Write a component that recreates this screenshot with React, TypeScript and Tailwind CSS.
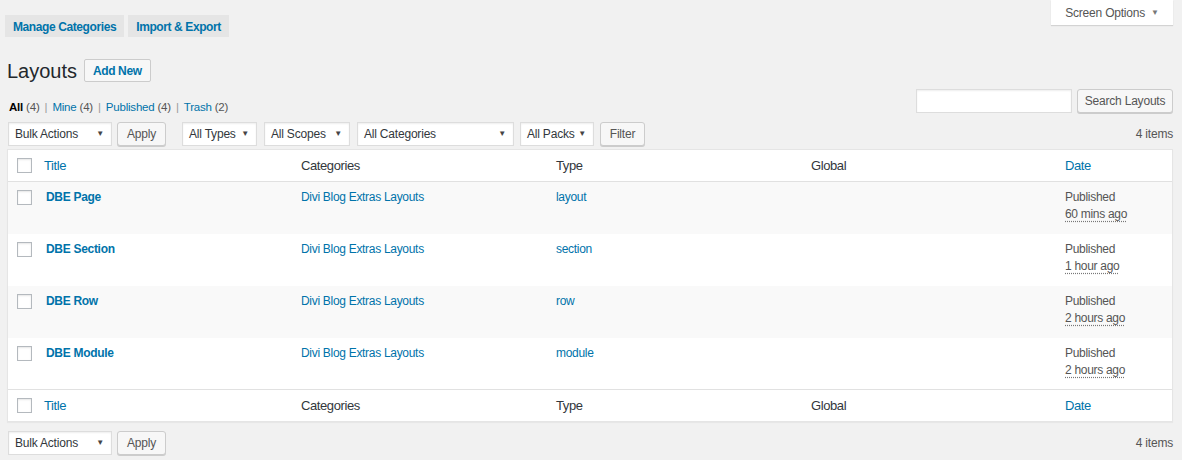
const rows = [
  { title: 'DBE Page', type: 'layout', ago: '60 mins ago' },
  { title: 'DBE Section', type: 'section', ago: '1 hour ago' },
  { title: 'DBE Row', type: 'row', ago: '2 hours ago' },
  { title: 'DBE Module', type: 'module', ago: '2 hours ago' },
];

const cols = 'grid grid-cols-[36px_257px_255px_255px_254px_1fr]';

function Checkbox() {
  return (
    <span className="block w-[15px] h-[15px] bg-white border border-[#b4b9be] shadow-[inset_0_1px_2px_rgba(0,0,0,0.1)]" />
  );
}

function Select({ label, width }: { label: string; width: string }) {
  return (
    <div
      className={`${width} h-[24px] flex items-center justify-between bg-white border border-[#ddd] shadow-[inset_0_1px_2px_rgba(0,0,0,0.07)] pl-[6px] pr-[7px] text-[#32373c]`}
    >
      <span>{label}</span>
      <span className="text-[8px] text-[#444]">▼</span>
    </div>
  );
}

function Button({ label, width }: { label: string; width: string }) {
  return (
    <div
      className={`${width} h-[24px] flex items-center justify-center bg-[#f7f7f7] border border-[#ccc] rounded-[3px] shadow-[0_1px_0_#ccc] text-[#555]`}
    >
      {label}
    </div>
  );
}

function HeadRow({ top }: { top: boolean }) {
  return (
    <div
      className={`${cols} h-[32px] items-center ${top ? 'border-b' : 'border-t'} border-[#e1e1e1] text-[13px] tracking-[-0.4px] text-[#32373c]`}
    >
      <div className="pl-[9px]">
        <Checkbox />
      </div>
      <div className="pt-[1px] text-[#0073aa]">Title</div>
      <div>Categories</div>
      <div>Type</div>
      <div>Global</div>
      <div className="pt-[1px] text-[#0073aa]">Date</div>
    </div>
  );
}

function TableNav({ children }: { children: React.ReactNode }) {
  return (
    <div className="flex items-center justify-between h-[24px]">
      <div className="flex items-center">{children}</div>
      <span className="text-[#555]">4 items</span>
    </div>
  );
}

export default function App() {
  return (
    <div className="min-h-[460px] bg-[#f1f1f1] font-['Liberation_Sans',Arial,sans-serif] text-[12px] tracking-[-0.2px] text-[#444] leading-none">
      <div className="flex items-start justify-between pl-[5px] pr-[9px]">
        <div className="flex gap-[4px] mt-[15px]">
          <div className="h-[22px] px-[8px] pt-[2px] flex items-center bg-[#e5e5e5] text-[#0073aa] font-semibold tracking-[-0.4px]">
            Manage Categories
          </div>
          <div className="h-[22px] px-[8px] pt-[2px] flex items-center bg-[#e5e5e5] text-[#0073aa] font-semibold tracking-[-0.4px]">
            Import &amp; Export
          </div>
        </div>
        <div className="w-[122px] h-[25px] flex items-center justify-center gap-[6px] bg-white shadow-[0_1px_1px_rgba(0,0,0,0.12)] text-[#555]">
          <span>Screen Options</span>
          <span className="text-[8px] text-[#777]">▼</span>
        </div>
      </div>

      <div className="px-[7px] pr-[9px]">
        <div className="flex justify-between items-end mt-[22px]">
          <div>
            <div className="flex items-center gap-[7px]">
              <h1 className="text-[20px] text-[#23282d] leading-none tracking-normal">Layouts</h1>
              <div className="h-[23px] px-[8px] flex items-center bg-[#f7f7f7] border border-[#ccc] rounded-[2px] text-[#0073aa] font-semibold tracking-[-0.4px] text-[12px]">
                Add New
              </div>
            </div>
            <div className="mt-[20px] ml-[2px] flex gap-[5px] text-[11.5px]">
              <span>
                <span className="text-black font-semibold">All</span> <span className="text-[#555]">(4)</span>
              </span>
              <span className="text-[#999]">|</span>
              <span className="text-[#0073aa]">
                Mine <span className="text-[#555]">(4)</span>
              </span>
              <span className="text-[#999]">|</span>
              <span className="text-[#0073aa]">
                Published <span className="text-[#555]">(4)</span>
              </span>
              <span className="text-[#999]">|</span>
              <span className="text-[#0073aa]">
                Trash <span className="text-[#555]">(2)</span>
              </span>
            </div>
          </div>
          <div className="flex gap-[5px] mb-[1px]">
            <div className="w-[156px] h-[24px] bg-white border border-[#ddd] shadow-[inset_0_1px_2px_rgba(0,0,0,0.07)]" />
            <Button label="Search Layouts" width="w-[96px]" />
          </div>
        </div>

        <div className="mt-[8px] ml-[1px]">
          <TableNav>
            <Select label="Bulk Actions" width="w-[104px]" />
            <div className="ml-[5px]">
              <Button label="Apply" width="w-[49px]" />
            </div>
            <div className="ml-[16px] flex gap-[7px]">
              <Select label="All Types" width="w-[75px]" />
              <Select label="All Scopes" width="w-[86px]" />
              <Select label="All Categories" width="w-[157px]" />
            </div>
            <div className="ml-[6px]">
              <Select label="All Packs" width="w-[74px]" />
            </div>
            <div className="ml-[6px]">
              <Button label="Filter" width="w-[45px]" />
            </div>
          </TableNav>
        </div>

        <div className="mt-[3px] bg-white border border-[#e5e5e5] shadow-[0_1px_1px_rgba(0,0,0,0.04)]">
          <HeadRow top />
          {rows.map((r, i) => (
            <div
              key={r.title}
              className={`${cols} ${i === rows.length - 1 ? 'h-[51px]' : 'h-[52px]'} pt-[8px] ${i % 2 === 0 ? 'bg-[#f9f9f9]' : 'bg-white'} text-[12px] tracking-[-0.3px]`}
            >
              <div className="pl-[9px]">
                <Checkbox />
              </div>
              <div className="pl-[2px] pt-[1px] text-[#0073aa] font-bold text-[12px] tracking-[-0.3px]">{r.title}</div>
              <div className="pt-[1px] text-[#0073aa]">Divi Blog Extras Layouts</div>
              <div className="pt-[1px] text-[#0073aa]">{r.type}</div>
              <div />
              <div className="pt-[1px] text-[#555] leading-[17px] -mt-[2px]">
                <div>Published</div>
                <div>
                  <span className="underline decoration-dotted decoration-[#777] underline-offset-[3px]">{r.ago}</span>
                </div>
              </div>
            </div>
          ))}
          <HeadRow top={false} />
        </div>

        <div className="mt-[9px] ml-[1px]">
          <TableNav>
            <Select label="Bulk Actions" width="w-[104px]" />
            <div className="ml-[5px]">
              <Button label="Apply" width="w-[49px]" />
            </div>
          </TableNav>
        </div>
      </div>
    </div>
  );
}
